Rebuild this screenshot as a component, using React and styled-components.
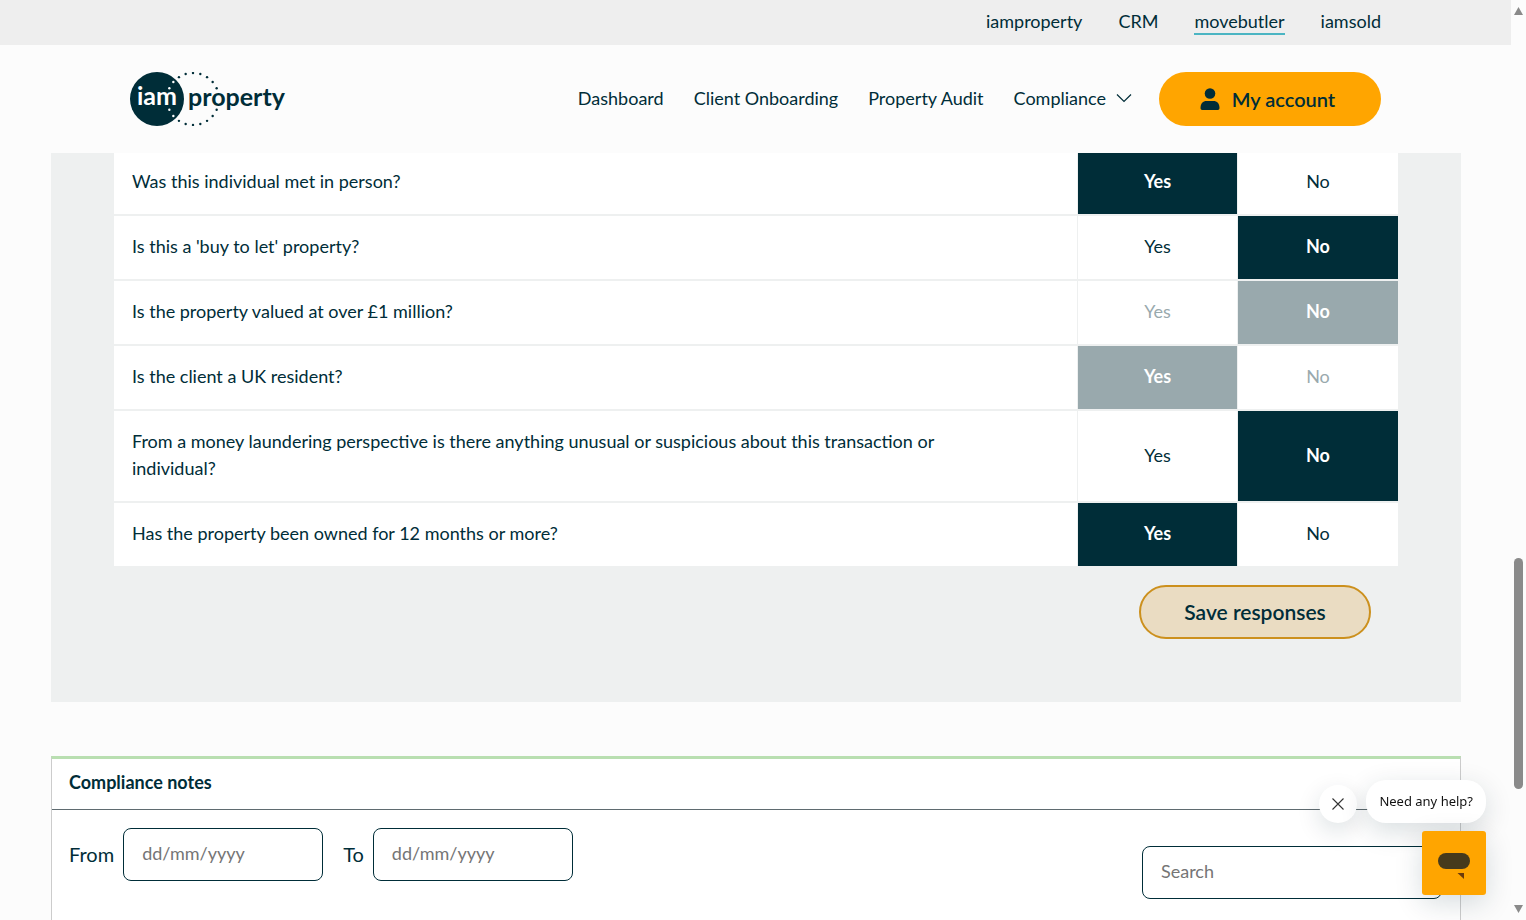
import React, { useState } from "react";
import styled, { createGlobalStyle } from "styled-components";

const ink = "#002d38";
const orange = "#ffa500";

const questionList = [
  { id: "met", text: "Was this individual met in person?", answer: "Yes" },
  { id: "let", text: "Is this a 'buy to let' property?", answer: "No" },
  { id: "value", text: "Is the property valued at over £1 million?", answer: "No", locked: true },
  { id: "resident", text: "Is the client a UK resident?", answer: "Yes", locked: true },
  {
    id: "suspicious",
    text: "From a money laundering perspective is there anything unusual or suspicious about this transaction or individual?",
    answer: "No",
  },
  { id: "owned", text: "Has the property been owned for 12 months or more?", answer: "Yes" },
];

// ring of dots round the second half of the logo
const dots = Array.from({ length: 22 }, (_, i) => {
  const angle = (i / 22) * Math.PI * 2 - Math.PI / 2;
  const x = 63 + 26 * Math.cos(angle);
  const y = 27 + 26 * Math.sin(angle);
  return { x, y, inside: Math.hypot(x - 27, y - 27) < 27 };
}).filter((dot) => Math.abs(dot.y - 27) > 9);

const Logo = () => (
  <svg width="160" height="54" viewBox="0 0 160 54" role="img" aria-label="iamproperty">
    <circle cx="27" cy="27" r="27" fill={ink} />
    {dots.map((dot, i) => (
      <circle key={i} cx={dot.x} cy={dot.y} r="1.2" fill={dot.inside ? "#fff" : ink} />
    ))}
    <LogoText x="7" y="33" fill="#fff">iam</LogoText>
    <LogoText x="58" y="34" fill={ink}>property</LogoText>
  </svg>
);

const Question = ({ question, value, onChange }) => (
  <Row role="radiogroup" aria-labelledby={question.id}>
    <QuestionCell>
      <QuestionText id={question.id}>{question.text}</QuestionText>
    </QuestionCell>
    {["Yes", "No"].map((option) => (
      <Option key={option} $checked={value === option} $locked={question.locked}>
        <HiddenRadio
          type="radio"
          name={question.id}
          value={option}
          checked={value === option}
          disabled={question.locked}
          onChange={() => onChange(option)}
        />
        {option}
      </Option>
    ))}
  </Row>
);

const App = () => {
  const [answers, setAnswers] = useState(
    Object.fromEntries(questionList.map((q) => [q.id, q.answer]))
  );

  return (
    <Window>
      <GlobalStyle />
      <Page>
        <TopBar>
          <TopLink href="#">iamproperty</TopLink>
          <TopLink href="#">CRM</TopLink>
          <TopLink href="#" $active>movebutler</TopLink>
          <TopLink href="#">iamsold</TopLink>
        </TopBar>
        <Header>
          <LogoLink href="#">
            <Logo />
          </LogoLink>
          <Nav>
            <NavLinks>
              <NavLink href="#">Dashboard</NavLink>
              <NavLink href="#">Client Onboarding</NavLink>
              <NavLink href="#">Property Audit</NavLink>
              <NavLink href="#">
                Compliance
                <svg width="16" height="10" viewBox="0 0 16 10" fill="none" stroke={ink} strokeWidth="1.2">
                  <path d="M1 1.5 8 8.5 15 1.5" />
                </svg>
              </NavLink>
            </NavLinks>
            <AccountButton type="button">
              <svg width="20" height="22" viewBox="0 0 20 22" fill={ink}>
                <circle cx="10" cy="5.5" r="5.3" />
                <path d="M.5 20C.5 15.500 3 13 6.500 13h7c3.500 0 6 2.500 6 7 0 1.300-.6 2-1.700 2H2.200C1.100 22 .5 21.300.5 20z" />
              </svg>
              My account
            </AccountButton>
          </Nav>
        </Header>
        <Main>
          <Panel>
            <Rows>
              {questionList.map((q) => (
                <Question
                  key={q.id}
                  question={q}
                  value={answers[q.id]}
                  onChange={(value) => setAnswers({ ...answers, [q.id]: value })}
                />
              ))}
            </Rows>
            <Actions>
              <SaveButton type="button">Save responses</SaveButton>
            </Actions>
          </Panel>
          <Notes>
            <NotesTitle>Compliance notes</NotesTitle>
            <Filters>
              <Field>
                From
                <TextInput type="text" placeholder="dd/mm/yyyy" />
              </Field>
              <Field>
                To
                <TextInput type="text" placeholder="dd/mm/yyyy" />
              </Field>
              <SearchInput type="search" placeholder="Search" aria-label="Search" />
            </Filters>
          </Notes>
        </Main>
      </Page>
      <ScrollBar aria-hidden="true">
        <Arrow />
        <Track>
          <Thumb />
        </Track>
        <Arrow $down />
      </ScrollBar>
      <Help>
        <HelpRow>
          <CloseButton type="button" aria-label="Close message">
            <svg width="12" height="12" viewBox="0 0 12 12" stroke="#333" strokeWidth="1.1">
              <path d="M.5.5 11.500 11.500M11.500.5.5 11.500" />
            </svg>
          </CloseButton>
          <HelpBubble type="button">Need any help?</HelpBubble>
        </HelpRow>
        <Launcher type="button" aria-label="Open chat">
          <svg width="64" height="64" viewBox="0 0 64 64">
            <rect x="16" y="22" width="32" height="16" rx="8" fill="#463a1c" />
            <path d="M35.500 42H42v6z" fill="#6b3a0c" />
          </svg>
        </Launcher>
      </Help>
    </Window>
  );
};

const GlobalStyle = createGlobalStyle`
  *, *::before, *::after {
    box-sizing: border-box;
  }

  body {
    margin: 0;
    background: #fcfcfc;
    color: ${ink};
    font-family: Lato, "Liberation Sans", sans-serif;
    font-size: 18px;
    line-height: 27px;
  }

  button, input {
    font: inherit;
    color: inherit;
  }
`;

const Window = styled.div`
  display: flex;
  height: 100vh;
  overflow: hidden;
`;

const Page = styled.div`
  flex: 1;
  min-width: 0;
`;

const TopBar = styled.nav`
  display: flex;
  justify-content: flex-end;
  align-items: center;
  gap: 36px;
  height: 45px;
  padding: 0 130px 2px;
  background: #eeeeee;
`;

const TopLink = styled.a`
  color: ${ink};
  text-decoration: none;
  line-height: 24px;
  border-bottom: 2px solid ${(props) => (props.$active ? "#4bb5c3" : "transparent")};
`;

const Header = styled.header`
  position: relative;
  z-index: 1;
  display: flex;
  justify-content: space-between;
  align-items: center;
  height: 108px;
  padding: 0 130px;
  background: #fcfcfc;
`;

const LogoLink = styled.a`
  display: flex;
`;

const LogoText = styled.text`
  font-family: Lato, sans-serif;
  font-size: 25px;
  font-weight: 700;
`;

const Nav = styled.nav`
  display: flex;
  align-items: center;
  gap: 27px;
`;

const NavLinks = styled.div`
  display: flex;
  align-items: center;
  gap: 30px;
  padding-bottom: 2px;
`;

const NavLink = styled.a`
  display: flex;
  align-items: center;
  gap: 10px;
  color: ${ink};
  text-decoration: none;
`;

const AccountButton = styled.button`
  display: flex;
  align-items: center;
  justify-content: center;
  gap: 12px;
  width: 222px;
  height: 54px;
  padding: 0 27px 0 22px;
  border: 0;
  border-radius: 27px;
  background: ${orange};
  font-size: 20px;
  font-weight: 600;
`;

const Main = styled.main`
  padding: 0 50px 0 51px;
`;

const Panel = styled.section`
  padding: 0 63px 63px;
  background: #eef0f0;
`;

/* the first row is scrolled slightly under the header */
const Rows = styled.div`
  display: grid;
  gap: 2px;
  margin-top: -2px;
`;

const Row = styled.div`
  display: grid;
  grid-template-columns: 1fr 159px 160px;
  gap: 1px;
`;

const QuestionCell = styled.div`
  padding: 17px 18px 19px;
  background: #fff;
`;

const QuestionText = styled.div`
  max-width: 840px;
`;

const optionBackground = ({ $checked, $locked }) => {
  if (!$checked) return "#fff";
  return $locked ? "#99a9ad" : ink;
};

const optionColor = ({ $checked, $locked }) => {
  if ($checked) return "#fff";
  return $locked ? "#99a9ad" : ink;
};

const Option = styled.label`
  display: flex;
  align-items: center;
  justify-content: center;
  padding-bottom: 2px;
  background: ${optionBackground};
  color: ${optionColor};
  font-weight: ${(props) => (props.$checked ? 700 : 400)};
  cursor: pointer;
`;

const HiddenRadio = styled.input`
  appearance: none;
  width: 0;
  height: 0;
  margin: 0;
`;

const Actions = styled.div`
  display: flex;
  justify-content: flex-end;
  padding: 19px 27px 0;
`;

const SaveButton = styled.button`
  width: 232px;
  height: 54px;
  padding: 0 0 2px;
  border: 2px solid #cc901d;
  border-radius: 27px;
  background: #eadcc2;
  font-size: 21px;
  font-weight: 600;
`;

const Notes = styled.section`
  min-height: 400px;
  margin-top: 54px;
  border: 1px solid #cccccc;
  border-top: 3px solid #b9dfb1;
  background: #fff;
`;

const NotesTitle = styled.h2`
  margin: 0;
  padding: 10px 17px 13px;
  border-bottom: 1px solid #5f6b70;
  font-size: 18px;
  font-weight: 700;
`;

const Filters = styled.form`
  display: flex;
  align-items: flex-start;
  gap: 20px;
  padding: 18px 18px 0 17px;
`;

const Field = styled.label`
  display: flex;
  align-items: center;
  gap: 9px;
  font-size: 20px;
`;

const TextInput = styled.input`
  width: 200px;
  height: 53px;
  padding: 0 18px 3px;
  border: 1px solid ${ink};
  border-radius: 8px;
  background: #fff;
  font-size: 18px;

  &::placeholder {
    color: #757575;
    opacity: 1;
  }
`;

const SearchInput = styled(TextInput)`
  width: 300px;
  margin: 18px 0 0 auto;
`;

const ScrollBar = styled.div`
  display: flex;
  flex-direction: column;
  align-items: center;
  width: 15px;
  padding: 7px 0;
  background: #fcfcfc;
`;

const Arrow = styled.span`
  width: 9px;
  height: 8px;
  background: #8a8a8a;
  clip-path: ${(props) =>
    props.$down ? "polygon(0 0, 100% 0, 50% 100%)" : "polygon(50% 0, 100% 100%, 0 100%)"};
`;

const Track = styled.div`
  flex: 1;
  display: grid;
  grid-template-rows: 543fr 231fr 116fr;
`;

const Thumb = styled.div`
  grid-row: 2;
  width: 9px;
  border-radius: 5px;
  background: #8a8a8a;
`;

const Help = styled.aside`
  position: fixed;
  z-index: 2;
  right: 40px;
  bottom: 25px;
  display: flex;
  flex-direction: column;
  align-items: flex-end;
  gap: 8px;
`;

const HelpRow = styled.div`
  display: flex;
  align-items: flex-end;
  gap: 9px;
`;

const CloseButton = styled.button`
  display: flex;
  align-items: center;
  justify-content: center;
  width: 38px;
  height: 38px;
  padding: 0;
  border: 0;
  border-radius: 50%;
  background: #fff;
  box-shadow: 0 8px 24px rgba(0, 45, 56, 0.14);
`;

const HelpBubble = styled.button`
  height: 43px;
  padding: 0 13px;
  border: 0;
  border-radius: 20px;
  background: #fff;
  box-shadow: 0 8px 28px rgba(0, 45, 56, 0.16);
  color: #111;
  font-family: "Noto Sans", sans-serif;
  font-size: 13px;
`;

const Launcher = styled.button`
  display: flex;
  padding: 0;
  border: 0;
  border-radius: 3px;
  background: ${orange};
  box-shadow: 0 8px 28px rgba(0, 45, 56, 0.16);
`;

export default App;
